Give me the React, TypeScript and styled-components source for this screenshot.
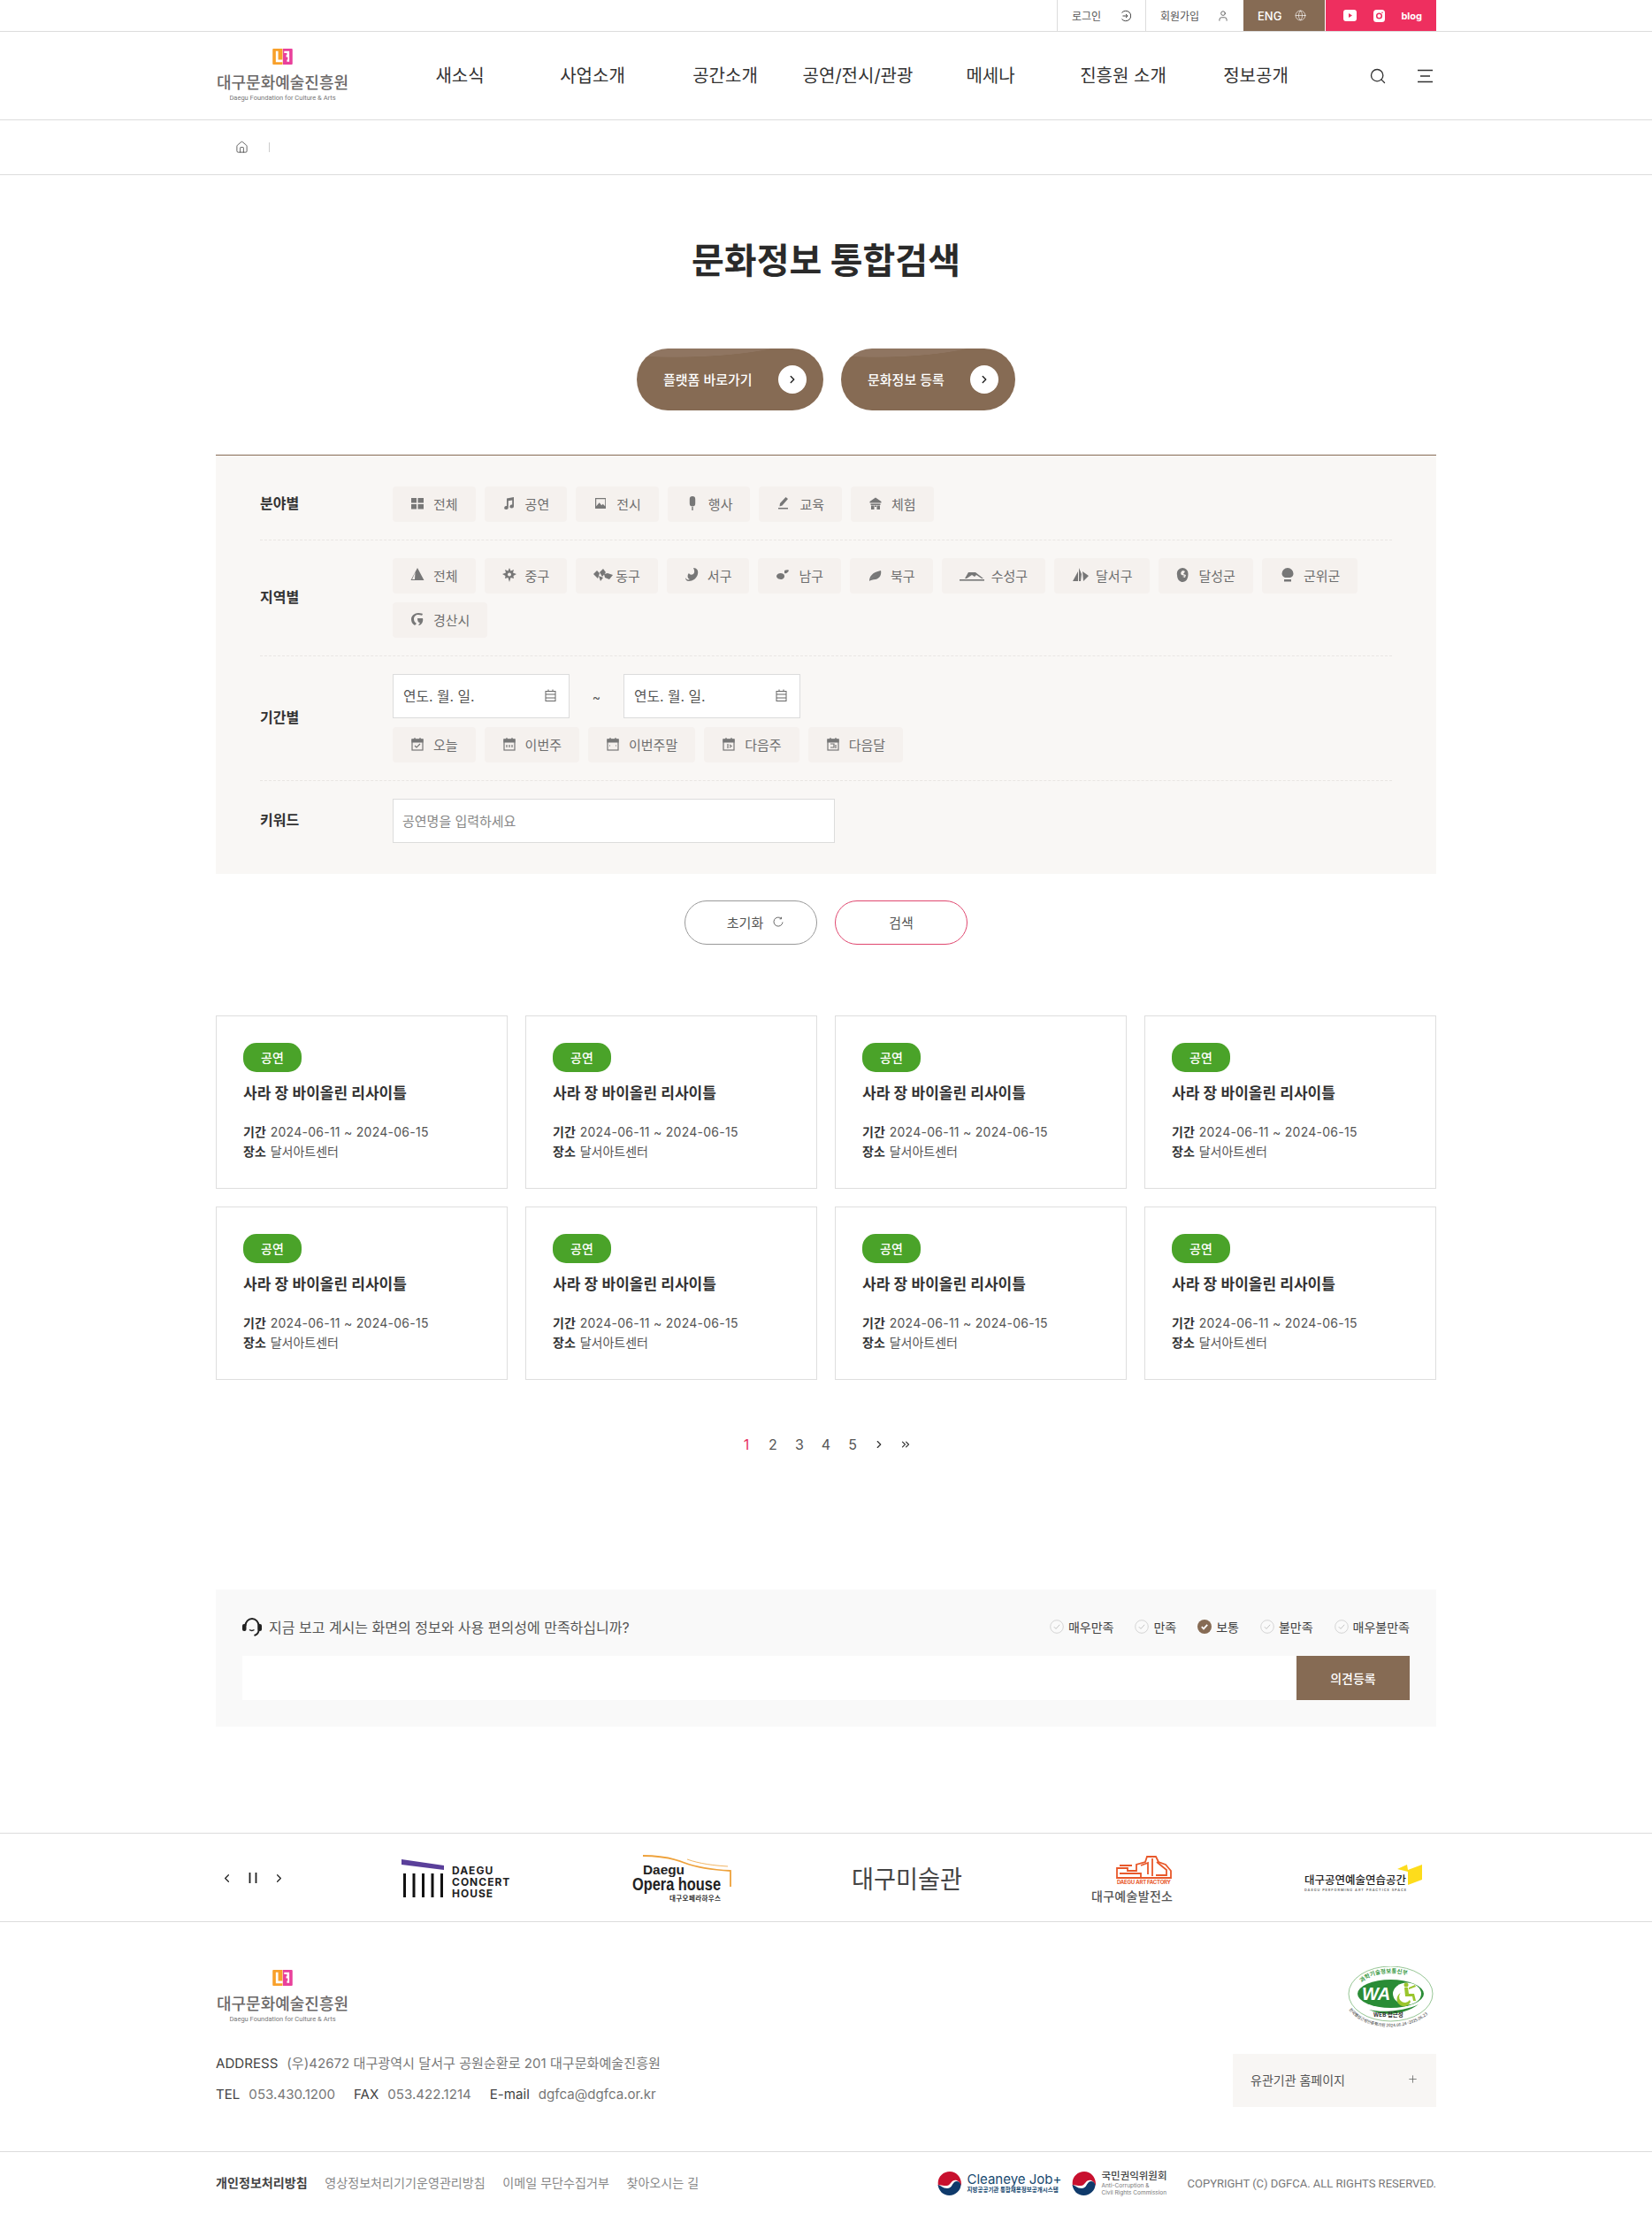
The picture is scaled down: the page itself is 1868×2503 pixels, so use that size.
import React from "react";
import styled, { createGlobalStyle } from "styled-components";
import { Search, House, ChevronRight, ChevronLeft, ChevronsRight, Plus, User, Globe } from "lucide-react";

const FONT = `Inter, "Noto Sans CJK KR", "Noto Sans", sans-serif`;
const BROWN = "#866b54";
const PINK = "#ee2f5f";

const Global = createGlobalStyle`
  html, body { margin: 0; padding: 0; background: #fff; }
  body { font-family: ${FONT}; color: #333; }
  * { box-sizing: border-box; }
`;

const Page = styled.div`width: 1868px; height: 2503px; overflow: hidden; background: #fff;`;
const Wrap = styled.div`width: 1380px; margin: 0 auto;`;

const TopBar = styled.div`height: 36px; border-bottom: 1px solid #dcdcdc;`;
const TopRow = styled(Wrap)`display: flex; justify-content: flex-end; height: 35px;`;
const TopItem = styled.a<{ $w: number }>`
  width: ${(p) => p.$w}px; height: 35px; display: flex; align-items: center; justify-content: space-between;
  padding: 0 16px; font-size: 12px; color: #555; border-left: 1px solid #dcdcdc;
`;
const EngItem = styled(TopItem)`background: ${BROWN}; color: #fff; border-left: 0; font-weight: 500; font-size: 13px; margin-right: 1px; padding-right: 21px;`;
const SocialItem = styled.div`
  width: 125px; height: 35px; background: ${PINK}; color: #fff; display: flex; align-items: center;
  justify-content: space-between; padding: 0 16px 0 20px; font-size: 11px; font-weight: 700;
`;

const MainHeader = styled.header`height: 100px; border-bottom: 1px solid #dcdcdc;`;
const HeaderRow = styled(Wrap)`display: flex; align-items: center; height: 99px;`;
const LogoBox = styled.div`width: 151px; height: 61px; display: flex; flex-direction: column; align-items: center; flex: none;`;
const LogoName = styled.span`font-size: 18px; line-height: 18px; margin-top: 12px; color: #6b6868; font-weight: 500; white-space: nowrap;`;
const LogoSub = styled.span`font-family: Roboto, sans-serif; font-size: 7.5px; line-height: 10px; margin-top: 3px; color: #777; white-space: nowrap;`;
const Nav = styled.nav`display: grid; grid-template-columns: repeat(7, 150px); margin-left: 50px;`;
const NavLink = styled.a`text-align: center; font-size: 20px; color: #333; white-space: nowrap; line-height: 28px;`;
const Utility = styled.div`display: flex; align-items: center; gap: 35px; margin-left: auto; padding-right: 3px; color: #333;`;

const Crumb = styled.div`height: 62px; border-bottom: 1px solid #dcdcdc;`;
const CrumbRow = styled(Wrap)`display: flex; align-items: center; height: 61px; padding-left: 22px; color: #444;`;
const CrumbSep = styled.i`width: 1px; height: 11px; background: #ccc; margin-left: 23px;`;

const Title = styled.h1`margin: 73px 0 0; font-size: 40px; line-height: 48px; font-weight: 700; color: #2a2a2a; text-align: center;`;
const HeroRow = styled.div`display: flex; justify-content: center; gap: 20px; margin-top: 75px;`;
const HeroBtn = styled.a<{ $w: number }>`
  width: ${(p) => p.$w}px; height: 70px; border-radius: 35px; display: flex; align-items: center; justify-content: space-between;
  padding: 0 19px 0 30px; color: #fff; font-size: 15px; font-weight: 500; overflow: hidden;
  background: radial-gradient(ellipse 115% 70% at 20% -30%, #8f7561 62%, transparent 63%), ${BROWN};
`;
const HeroLabel = styled.span`padding-bottom: 2px;`;
const HeroCircle = styled.span`width: 32px; height: 32px; border-radius: 50%; background: #fff; color: #222; display: flex; align-items: center; justify-content: center;`;

const Panel = styled(Wrap)`margin-top: 50px; background: #f9f7f5; border-top: 1px solid ${BROWN}; padding: 0 50px;`;
const Row = styled.div`
  display: flex; align-items: center; padding: 20px 0; border-bottom: 1px dashed #e9e6e3;
  &:first-child { padding-top: 35px; }
  &:last-child { padding-bottom: 35px; border-bottom: 0; }
`;
const RowLabel = styled.div`width: 150px; flex: none; font-size: 16px; font-weight: 700; color: #333; padding-bottom: 5px;`;
const Chips = styled.div`display: flex; flex-wrap: wrap; gap: 10px;`;
const Chip = styled.a<{ $gap?: number }>`
  height: 40px; padding: 0 20px 2px; border-radius: 4px; background: #f5f1ee; color: #6e6e6e; font-size: 15px;
  display: inline-flex; align-items: center; gap: ${(p) => p.$gap ?? 10}px; white-space: nowrap;
`;
const DateLine = styled.div`display: flex; align-items: center; margin-bottom: 10px;`;
const DateField = styled.div`
  width: 200px; height: 50px; background: #fff; border: 1px solid #dcdcdc; display: flex; align-items: center;
  justify-content: space-between; padding: 0 14px 2px 11px; font-size: 15.8px; color: #555;
`;
const Tilde = styled.span`width: 61px; text-align: center; font-size: 14px; color: #555;`;
const Keyword = styled.input`
  width: 500px; height: 50px; background: #fff; border: 1px solid #dcdcdc; padding: 0 10px; font: 15px ${FONT}; outline: none;
  &::placeholder { color: #888; opacity: 1; }
`;

const Actions = styled.div`display: flex; justify-content: center; gap: 20px; margin-top: 30px;`;
const ActionBtn = styled.a<{ $pink?: boolean }>`
  width: 150px; height: 50px; border-radius: 25px; background: #fff; border: 1px solid ${(p) => (p.$pink ? "#e0476f" : "#999")};
  display: flex; align-items: center; justify-content: center; gap: 11px; color: #555; font-size: 15px;
  padding: 0 0 2px ${(p) => (p.$pink ? 0 : 10)}px;
`;

const Cards = styled(Wrap)`display: grid; grid-template-columns: repeat(4, 330px); gap: 20px; margin-top: 80px;`;
const Card = styled.article`height: 196px; border: 1px solid #dedede; padding: 30px 30px 0;`;
const Badge = styled.span`
  width: 66px; height: 33px; border-radius: 15px; background: #4aa329; color: #fff; font-size: 14px; font-weight: 500;
  display: flex; align-items: center; justify-content: center; padding-bottom: 2px;
`;
const CardTitle = styled.h3`margin: 12px 0 21px; font-size: 17px; line-height: 24px; font-weight: 600; color: #333; white-space: nowrap;`;
const Meta = styled.p`margin: 0; font-size: 14px; line-height: 22px; color: #555; white-space: nowrap;`;
const MetaKey = styled.b`font-weight: 700; color: #333; margin-right: 1px;`;
const MetaDate = styled.span`letter-spacing: 0.26px;`;

const Pager = styled.div`display: flex; justify-content: center; margin-top: 58px; height: 30px;`;
const PageNo = styled.a<{ $on?: boolean }>`
  width: 30px; height: 30px; display: flex; align-items: center; justify-content: center; font-size: 16px;
  color: ${(p) => (p.$on ? "#e6305f" : "#555")};
`;

const Survey = styled(Wrap)`margin-top: 149px; background: #f9f9f9; padding: 30px;`;
const SurveyHead = styled.div`display: flex; align-items: center; justify-content: space-between; height: 26px; margin-bottom: 19px;`;
const Question = styled.div`display: flex; align-items: center; gap: 8px; font-size: 16px; color: #555; padding-bottom: 2px;`;
const Radios = styled.div`display: flex; gap: 24px; padding-bottom: 2px;`;
const Radio = styled.label`display: flex; align-items: center; gap: 5px; font-size: 14px; color: #3f3f3f; white-space: nowrap;`;
const OpinionRow = styled.div`display: flex; height: 50px; background: #fff;`;
const OpinionInput = styled.div`flex: 1;`;
const OpinionBtn = styled.a`width: 128px; background: ${BROWN}; color: #fff; font-size: 14px; font-weight: 500; display: flex; align-items: center; justify-content: center;`;

const LogoBar = styled.section`margin-top: 120px; border-top: 1px solid #dcdcdc; border-bottom: 1px solid #dcdcdc; height: 101px;`;
const LogoGrid = styled(Wrap)`display: grid; grid-template-columns: 144px repeat(4, 255px) 216px; height: 99px;`;
const Controls = styled.div`display: flex; align-items: center; gap: 16px; padding-left: 5px; color: #222; padding-top: 1px;`;
const LogoSvg = styled.svg`display: block; overflow: visible;`;

const FooterMain = styled(Wrap)`display: flex; justify-content: space-between; padding: 50px 0 46px;`;
const FooterLeft = styled.div`padding-top: 4px;`;
const AddressBlock = styled.div`margin-top: 28px; font-size: 15.1px; line-height: 34.5px; color: #777; white-space: nowrap; height: 70px;`;
const AddrLine = styled.div`display: flex;`;
const AddrKey = styled.span`color: #444; margin-right: 10px;`;
const AddrVal = styled.span`margin-right: 21px;`;
const FooterRight = styled.div`display: flex; flex-direction: column; align-items: flex-end;`;
const Related = styled.div`
  width: 230px; height: 60px; margin-top: 30px; background: #f8f6f4; display: flex; align-items: center; justify-content: space-between;
  padding: 0 20px 3px; font-size: 14px; color: #555;
`;
const FooterBottom = styled.div`border-top: 1px solid #dcdcdc;`;
const BottomRow = styled(Wrap)`display: flex; align-items: center; height: 70px;`;
const FootLinks = styled.div`display: flex; gap: 19.5px; font-size: 14.1px; color: #888; white-space: nowrap; padding-bottom: 2px;`;
const FootStrong = styled.b`font-weight: 600; color: #444;`;
const Badges = styled.div`display: flex; align-items: center; margin-left: auto; gap: 12px;`;
const GovBadge = styled.div`display: flex; align-items: center; gap: 6px;`;
const GovText = styled.div`display: flex; flex-direction: column;`;
const GovMain = styled.span<{ $blue?: boolean }>`
  font-size: ${(p) => (p.$blue ? 15 : 11.5)}px; line-height: ${(p) => (p.$blue ? 17 : 14)}px; color: ${(p) => (p.$blue ? "#17496f" : "#444")};
  font-weight: ${(p) => (p.$blue ? 400 : 500)}; white-space: nowrap; margin-bottom: 1px;
`;
const GovSub = styled.span<{ $blue?: boolean }>`
  font-size: 6.5px; line-height: 7.5px; color: ${(p) => (p.$blue ? "#17496f" : "#777")}; white-space: nowrap;
  font-weight: ${(p) => (p.$blue ? 700 : 400)};
`;
const Copyright = styled.div`margin-left: 23px; font-family: Roboto, sans-serif; font-size: 13px; color: #777; white-space: nowrap;`;

const Mark = () => (
  <svg width="25" height="20" viewBox="0 0 25 20">
    <path fill="#f8a02a" d="M1 0h11.500v20H1a1 1 0 0 1-1-1V1a1 1 0 0 1 1-1z" />
    <path fill="#e9409b" d="M13 0h11a1 1 0 0 1 1 1v18a1 1 0 0 1-1 1H13z" />
    <path fill="#fff" d="M4 3h3v11h5.500v3H4z" />
    <path fill="#fff" d="M14.500 3H21v13.500h-3V14h1V10.500h-2V8h1V5.500h-3.500z" />
  </svg>
);

const Logo = () => (
  <LogoBox>
    <Mark />
    <LogoName>대구문화예술진흥원</LogoName>
    <LogoSub>Daegu Foundation for Culture &amp; Arts</LogoSub>
  </LogoBox>
);

const Ico = ({ w = 16, children }: { w?: number; children: React.ReactNode }) => (
  <svg width={w} height="16" viewBox={`0 0 ${w} 16`} fill="#777" style={{ flex: "none" }}>{children}</svg>
);

const fieldIcons: Record<string, React.ReactNode> = {
  grid: <path d="M1 2h6v5.500H1zM8.500 2H15v5.500H8.500zM1 9h6v5.500H1zM8.500 9H15v5.500H8.500z" />,
  music: <path d="M5 2.500 13 1v10.500a2.300 2 0 1 1-1.800-2V4.500L6.800 5.300v7.700a2.300 2 0 1 1-1.800-2z" />,
  image: <path fillRule="evenodd" d="M2 2h12v12H2zM3.200 3.200v8l3.500-4 2.500 3 1.500-1.500 2.500 2.500V3.200z" />,
  mic: <path d="M8 0a3.200 3.200 0 0 1 3.200 3.200v5a3.200 3.200 0 0 1-6.400 0v-5A3.200 3.200 0 0 1 8 0zM7.300 12h1.400v4H7.300z" />,
  pen: <path d="M10.500 1 13 3 6.500 10.500 3.500 11.500 4 8zM2 13h11v1.500H2z" />,
  house: <path d="M8 1.500 14.500 6v1.500h-13V6zM2.500 8.500h11V10h-11zM3 10.500h3.500V15H3zM9.500 10.500H13V15H9.500zM7 10.500h2V12H7z" />,
};
const regionIcons: Record<string, React.ReactNode> = {
  mount: <path d="M8 0 15.500 14H.5zM5.500 5 2 13h3zM9 4l4.500 9.500h-3z" />,
  gear: <path d="M8 0l1.500 3.500L13 2l-1 3.500L16 7l-3.500 2L13 12l-3.500-1L8 16 6.500 11 3 12l.5-3L0 7l4-1.500L3 2l3.500 1.500zM8 5.500a2 2 0 1 0 0 4 2 2 0 0 0 0-4z" />,
  flock: <path d="M0 7l4-4 3 3-2 6zM7 5l4-4 3 4-4 5zM12 7l4-1 6 2-4 5-5-2zM6 9l5 2-3 4z" />,
  swirl: <path d="M10 0c4 0 6 3 5 7-1 5-6 8-10 8-3 0-4-2-4-4 1 2 3 3 5 2-3-1-3-5-1-7 1 2 3 2 5 1 1-1 2-3 0-7z" />,
  drops: <path d="M10 3c2-1 5-1 5 0-1 2-3 4-5 3zM1 9c1-3 5-4 8-2 2 2 1 5-2 6-3 0-6-1-6-4z" />,
  leaf: <path d="M15 3c1 4-1 9-6 10-3 0-6 1-7 2 0-5 3-10 13-12zM3 13 11 6 4 12z" />,
  susung: <>
    <path d="M10 5h8l9 7h-2l-6-4-2 2-3-2-6 4H6z" />
    <rect x="0" y="13" width="28" height="1.600" />
  </>,
  dalseo: <path d="M1 15 7 4v11zM8 15V0l3 7-1 8zM12 4l7 5-6 6z" />,
  dalsung: <path d="M7 0a6.500 6.500 0 0 1 6.500 7c0 5-2 9-6.500 9-2 0-6-2-6-8a6.500 6.500 0 0 1 6-8zm1 3a3 3 0 0 0-2 5l4 1-3 1 3 1 1-3-3-1 2-3z" />,
  gunwi: <path d="M9 0a6.500 6.500 0 0 1 6.500 6.500c0 2-1 3.500-3.500 4.500H6C4 10 2.500 8.500 2.500 6.500A6.500 6.500 0 0 1 9 0zM5 13h8v2.500H5z" />,
  g: <path d="M9 1c3 0 5 1 5 1l-1 2s-1-1-4-1C6 3 4 5 4 8s2 4 3 5l-2 2C2 13 1 11 1 8c0-4 4-7 8-7zM8 7h6c1 3-1 8-5 8l2-3c-2 0-3-2-3-5z" />,
};

const Cal = ({ inner }: { inner?: React.ReactNode }) => (
  <svg width="14" height="16" viewBox="0 0 14 16" fill="none" stroke="#777" strokeWidth="1.200" style={{ flex: "none", marginLeft: 1, marginRight: 1 }}>
    <rect x="1" y="3" width="12" height="12" />
    <path d="M1 3h12v3H1z" fill="#777" />
    <path d="M4 1v2M10 1v2" />
    {inner}
  </svg>
);

const SmallCal = () => (
  <svg width="13" height="14" viewBox="0 0 13 14" fill="none" stroke="#666" strokeWidth="1">
    <rect x="1" y="2.500" width="11" height="11" />
    <path d="M1 6h11M1 10h11M4 .5v2M9 .5v2" />
  </svg>
);

const field: [string, string][] = [["전체", "grid"], ["공연", "music"], ["전시", "image"], ["행사", "mic"], ["교육", "pen"], ["체험", "house"]];
const regions: [string, string, number, number][] = [
  ["전체", "mount", 16, 10], ["중구", "gear", 16, 10], ["동구", "flock", 22, 3], ["서구", "swirl", 16, 10], ["남구", "drops", 16, 10],
  ["북구", "leaf", 16, 10], ["수성구", "susung", 28, 8], ["달서구", "dalseo", 20, 7], ["달성군", "dalsung", 15, 10], ["군위군", "gunwi", 18, 9], ["경산시", "g", 16, 10],
];
const dates: [string, React.ReactNode][] = [
  ["오늘", <path key="a" d="M4 10l2 2 4-4" />],
  ["이번주", <path key="b" d="M4 9v3M7 9v3M10 9v3" />],
  ["이번주말", <path key="c" d="M3 10h1M10 10h1" />],
  ["다음주", <path key="d" d="M6 8v5M8 9l2 1.500L8 12" />],
  ["다음달", <path key="e" d="M4 8h4v4H4M10 9v4" />],
];

const Taeguk = () => (
  <svg width="27" height="27" viewBox="0 0 27 27" style={{ flex: "none" }}>
    <path fill="#c8102e" d="M1 16C-1 7 6 0 14 0c7 0 13 6 13 14 0 1-.5 2-.5 2-1-5-5.500-7.500-9-5.500-3 2-3 5-7 5.500-4 .5-8-2-9.500 0z" />
    <path fill="#0f3a6b" d="M.5 15c1 7 6 12 13 12s13-6 13-12c-1-4-5-5-7.500-3-3 3-3 7-8 7-5 0-8-4-10.500-4z" />
  </svg>
);

const Wa = () => (
  <svg width="101" height="69" viewBox="0 0 101 69">
    <defs>
      <path id="waTop" d="M13 24 C 24 2, 76 2, 87 24" />
      <path id="waBot" d="M1 47 C 20 76, 80 76, 101 44" />
    </defs>
    <ellipse cx="49.500" cy="31" rx="47.500" ry="31" fill="#fff" stroke="#7cb77a" strokeWidth=".8" />
    <ellipse cx="49.500" cy="31" rx="37.500" ry="16" fill="#2a8c36" />
    <ellipse cx="68" cy="31" rx="16" ry="12.500" fill="#fff" />
    <path d="M25 49c16 8 40 6 56-6-14 7-40 10-56 6z" fill="#2a8c36" />
    <text x="17" y="38" fontFamily="Liberation Sans, sans-serif" fontStyle="italic" fontWeight="700" fontSize="20" fill="#fff">WA</text>
    <circle cx="67" cy="21" r="2.500" fill="#9ac52d" />
    <path d="M65 24h4l1 7h6l2 8h-3l-1-5h-8zM62 29a6.500 6.500 0 1 0 9 9l1 2a8 8 0 1 1-11-10z" fill="#9ac52d" />
    <path d="M70 24l7-3 1 2-8 3z" fill="#9ac52d" />
    <text fontFamily="Noto Sans CJK KR, sans-serif" fontWeight="700" fontSize="6.500" fill="#3a9a45"><textPath href="#waTop" startOffset="8%">과학기술정보통신부</textPath></text>
    <text x="30" y="57" fontFamily="Noto Sans CJK KR, sans-serif" fontWeight="700" fontSize="6.500" fill="#333">WEB 접근성</text>
    <text fontFamily="Noto Sans CJK KR, sans-serif" fontWeight="500" fontSize="4.600" fill="#555"><textPath href="#waBot" startOffset="2%">한국웹접근성인증평가원 2024.06.24~2025.06.23</textPath></text>
  </svg>
);

const SW = 255;
const LogoConcert = () => (
  <LogoSvg width={SW} height="99" viewBox={`0 0 ${SW} 99`}>
    <path d="M66 29 114 36v5L66 35z" fill="#5a3f9a" />
    {[0, 1, 2, 3, 4].map((i) => <rect key={i} x={68 + i * 10.500} y="45" width="3" height="27" fill="#111" />)}
    <g fontFamily="Inter, sans-serif" fontWeight="700" fontSize="12" fill="#222" letterSpacing="1">
      <text x="123" y="46">DAEGU</text>
      <text x="123" y="59">CONCERT</text>
      <text x="123" y="72">HOUSE</text>
    </g>
  </LogoSvg>
);
const LogoOpera = () => (
  <LogoSvg width={SW} height="99" viewBox={`0 0 ${SW} 99`}>
    <path d="M84 25c16 0 32 2 47 8 16 6 34 8 52 9v18" fill="none" stroke="#eea23c" strokeWidth="1.800" />
    <path d="M134 29c14 5 30 7 46 8" fill="none" stroke="#eea23c" strokeWidth=".8" />
    <g fontFamily="Liberation Sans, sans-serif" fontWeight="700" fill="#222">
      <text x="84" y="46" fontSize="14" textLength="47" lengthAdjust="spacingAndGlyphs">Daegu</text>
      <text x="72" y="64" fontSize="21" textLength="100" lengthAdjust="spacingAndGlyphs">Opera house</text>
    </g>
    <text x="114" y="76" fontFamily="Noto Sans CJK KR, sans-serif" fontWeight="700" fontSize="7.500" fill="#333" textLength="58">대구오페라하우스</text>
  </LogoSvg>
);
const LogoMuseum = () => (
  <LogoSvg width={SW} height="99" viewBox={`0 0 ${SW} 99`}>
    <text x="65" y="62" fontFamily="Noto Sans CJK KR, sans-serif" fontWeight="400" fontSize="28" fill="#444" textLength="125" lengthAdjust="spacingAndGlyphs">대구미술관</text>
  </LogoSvg>
);
const LogoFactory = () => (
  <LogoSvg width={SW} height="99" viewBox={`0 0 ${SW} 99`}>
    <g fill="none" stroke="#e8582a" strokeWidth="1.800">
      <path d="M110 50V39h12v3h10v-7l10-3 2-6h10l3 6 8 3 6 7v8z" />
      <path d="M113 45h24v5M137 36l8-3v13M150 28v20M155 32l11 9v6h-12M113 36h14" />
    </g>
    <text x="110" y="57" fontFamily="Inter, sans-serif" fontWeight="700" fontSize="6" fill="#e8582a" textLength="61">DAEGU ART FACTORY</text>
    <text x="81" y="76" fontFamily="Noto Sans CJK KR, sans-serif" fontWeight="500" fontSize="14" fill="#555" textLength="92">대구예술발전소</text>
  </LogoSvg>
);
const LogoPractice = () => (
  <LogoSvg width="216" height="99" viewBox="0 0 216 99">
    <path d="M172 40 183 35l1 6 16 -6 v17l-16 6v-15z" fill="#fddc1c" />
    <text x="67" y="57" fontFamily="Noto Sans CJK KR, sans-serif" fontWeight="500" fontSize="12.500" fill="#222" textLength="115" lengthAdjust="spacingAndGlyphs">대구공연예술연습공간</text>
    <text x="67" y="65" fontFamily="Inter, sans-serif" fontWeight="700" fontSize="3.800" fill="#777" textLength="115">DAEGU PERFORMING ART PRACTICE SPACE</text>
  </LogoSvg>
);

const RadioMark = ({ on }: { on?: boolean }) => (
  <svg width="16" height="16" viewBox="0 0 16 16">
    <circle cx="8" cy="8" r={on ? 8 : 7.300} fill={on ? BROWN : "#fafafa"} stroke={on ? "none" : "#d5d5d5"} />
    <path d="M4.800 8.200 7 10.400 11.200 5.800" fill="none" stroke={on ? "#fff" : "#c4c4c4"} strokeWidth={on ? 1.800 : 1} />
  </svg>
);

export default function App() {
  return (
    <Page>
      <Global />
      <TopBar>
        <TopRow>
          <TopItem $w={100}>
            로그인
            <svg width="13" height="14" viewBox="0 0 13 14" fill="none" stroke="#444" strokeWidth="1">
              <path d="M2.500 3.500a5.700 5.700 0 1 1 0 7M3.500 7h5.500M7 5l2 2-2 2" />
            </svg>
          </TopItem>
          <TopItem $w={111}>
            회원가입
            <User size={14} strokeWidth={1.3} color="#444" />
          </TopItem>
          <EngItem $w={92}>ENG<Globe size={13} strokeWidth={1.2} color="#fff" /></EngItem>
          <SocialItem>
            <svg width="15" height="13" viewBox="0 0 15 13"><rect width="15" height="13" rx="3" fill="#fff" /><path d="M6 4l4 2.500L6 9z" fill={PINK} /></svg>
            <svg width="13" height="14" viewBox="0 0 13 14"><rect width="13" height="14" rx="3.500" fill="#fff" /><circle cx="6.500" cy="7" r="2.800" fill="none" stroke={PINK} strokeWidth="1.500" /><circle cx="10" cy="3.300" r=".8" fill={PINK} /></svg>
            <span>blog</span>
          </SocialItem>
        </TopRow>
      </TopBar>

      <MainHeader>
        <HeaderRow>
          <Logo />
          <Nav>
            {["새소식", "사업소개", "공간소개", "공연/전시/관광", "메세나", "진흥원 소개", "정보공개"].map((n) => <NavLink key={n}>{n}</NavLink>)}
          </Nav>
          <Utility>
            <Search size={20} strokeWidth={1.6} />
            <svg width="18" height="16" viewBox="0 0 18 16" stroke="#333" strokeWidth="1.600"><path d="M0 1.500h17M3 8h11M0 14.500h17" /></svg>
          </Utility>
        </HeaderRow>
      </MainHeader>

      <Crumb>
        <CrumbRow>
          <House size={15} strokeWidth={1.3} />
          <CrumbSep />
        </CrumbRow>
      </Crumb>

      <Title>문화정보 통합검색</Title>
      <HeroRow>
        <HeroBtn $w={211}><HeroLabel>플랫폼 바로가기</HeroLabel><HeroCircle><ChevronRight size={14} strokeWidth={2.4} /></HeroCircle></HeroBtn>
        <HeroBtn $w={197}><HeroLabel>문화정보 등록</HeroLabel><HeroCircle><ChevronRight size={14} strokeWidth={2.4} /></HeroCircle></HeroBtn>
      </HeroRow>

      <Panel>
        <Row>
          <RowLabel>분야별</RowLabel>
          <Chips>{field.map(([t, i]) => <Chip key={t}><Ico>{fieldIcons[i]}</Ico>{t}</Chip>)}</Chips>
        </Row>
        <Row>
          <RowLabel>지역별</RowLabel>
          <Chips>{regions.map(([t, i, w, g]) => <Chip key={t} $gap={g}><Ico w={w}>{regionIcons[i]}</Ico>{t}</Chip>)}</Chips>
        </Row>
        <Row>
          <RowLabel>기간별</RowLabel>
          <div>
            <DateLine>
              <DateField>연도. 월. 일.<SmallCal /></DateField>
              <Tilde>~</Tilde>
              <DateField>연도. 월. 일.<SmallCal /></DateField>
            </DateLine>
            <Chips>{dates.map(([t, inner]) => <Chip key={t}><Cal inner={inner} />{t}</Chip>)}</Chips>
          </div>
        </Row>
        <Row>
          <RowLabel>키워드</RowLabel>
          <Keyword placeholder="공연명을 입력하세요" />
        </Row>
      </Panel>

      <Actions>
        <ActionBtn>
          초기화
          <svg width="12" height="13" viewBox="0 0 12 13" fill="none" stroke="#666" strokeWidth="1"><path d="M9.500 2.500A5 5 0 1 0 11 6.500M9.500 .8v2h-2" /></svg>
        </ActionBtn>
        <ActionBtn $pink>검색</ActionBtn>
      </Actions>

      <Cards>
        {Array.from({ length: 8 }).map((_, i) => (
          <Card key={i}>
            <Badge>공연</Badge>
            <CardTitle>사라 장 바이올린 리사이틀</CardTitle>
            <Meta><MetaKey>기간</MetaKey> <MetaDate>2024-06-11 ~ 2024-06-15</MetaDate></Meta>
            <Meta><MetaKey>장소</MetaKey> 달서아트센터</Meta>
          </Card>
        ))}
      </Cards>

      <Pager>
        <PageNo $on>1</PageNo><PageNo>2</PageNo><PageNo>3</PageNo><PageNo>4</PageNo><PageNo>5</PageNo>
        <PageNo><ChevronRight size={14} strokeWidth={2} color="#333" /></PageNo>
        <PageNo><ChevronsRight size={14} strokeWidth={2} color="#333" /></PageNo>
      </Pager>

      <Survey>
        <SurveyHead>
          <Question>
            <svg width="22" height="24" viewBox="0 0 22 24" fill="none" stroke="#222">
              <path d="M3.500 11a7.500 8 0 0 1 15 0v5c0 3-2 5-5 6" strokeWidth="2" />
              <rect x="0" y="9" width="4.500" height="8" rx="2" fill="#222" stroke="none" />
              <rect x="17.500" y="9" width="4.500" height="8" rx="2" fill="#222" stroke="none" />
              <path d="M8 15.500c1.500 1 4 1 5.500 0" strokeWidth="1.500" />
            </svg>
            지금 보고 계시는 화면의 정보와 사용 편의성에 만족하십니까?
          </Question>
          <Radios>
            {["매우만족", "만족", "보통", "불만족", "매우불만족"].map((t) => <Radio key={t}><RadioMark on={t === "보통"} />{t}</Radio>)}
          </Radios>
        </SurveyHead>
        <OpinionRow>
          <OpinionInput />
          <OpinionBtn>의견등록</OpinionBtn>
        </OpinionRow>
      </Survey>

      <LogoBar>
        <LogoGrid>
          <Controls>
            <ChevronLeft size={15} strokeWidth={2} />
            <svg width="12" height="12" viewBox="0 0 12 12" stroke="#222" strokeWidth="1.800"><path d="M2.500 0v12M9.500 0v12" /></svg>
            <ChevronRight size={15} strokeWidth={2} />
          </Controls>
          <LogoConcert />
          <LogoOpera />
          <LogoMuseum />
          <LogoFactory />
          <LogoPractice />
        </LogoGrid>
      </LogoBar>

      <FooterMain>
        <FooterLeft>
          <Logo />
          <AddressBlock>
            <AddrLine><AddrKey>ADDRESS</AddrKey><AddrVal>(우)42672 대구광역시 달서구 공원순환로 201 대구문화예술진흥원</AddrVal></AddrLine>
            <AddrLine>
              <AddrKey>TEL</AddrKey><AddrVal>053.430.1200</AddrVal>
              <AddrKey>FAX</AddrKey><AddrVal>053.422.1214</AddrVal>
              <AddrKey>E-mail</AddrKey><AddrVal>dgfca@dgfca.or.kr</AddrVal>
            </AddrLine>
          </AddressBlock>
        </FooterLeft>
        <FooterRight>
          <Wa />
          <Related>유관기관 홈페이지<Plus size={13} strokeWidth={1.5} color="#666" /></Related>
        </FooterRight>
      </FooterMain>

      <FooterBottom>
        <BottomRow>
          <FootLinks>
            <FootStrong>개인정보처리방침</FootStrong>
            <span>영상정보처리기기운영관리방침</span>
            <span>이메일 무단수집거부</span>
            <span>찾아오시는 길</span>
          </FootLinks>
          <Badges>
            <GovBadge>
              <Taeguk />
              <GovText>
                <GovMain $blue>Cleaneye Job+</GovMain>
                <GovSub $blue>지방공공기관 통합채용정보공개시스템</GovSub>
              </GovText>
            </GovBadge>
            <GovBadge>
              <Taeguk />
              <GovText>
                <GovMain>국민권익위원회</GovMain>
                <GovSub>Anti-Corruption &amp;</GovSub>
                <GovSub>Civil Rights Commission</GovSub>
              </GovText>
            </GovBadge>
          </Badges>
          <Copyright>COPYRIGHT (C) DGFCA. ALL RIGHTS RESERVED.</Copyright>
        </BottomRow>
      </FooterBottom>
    </Page>
  );
}
